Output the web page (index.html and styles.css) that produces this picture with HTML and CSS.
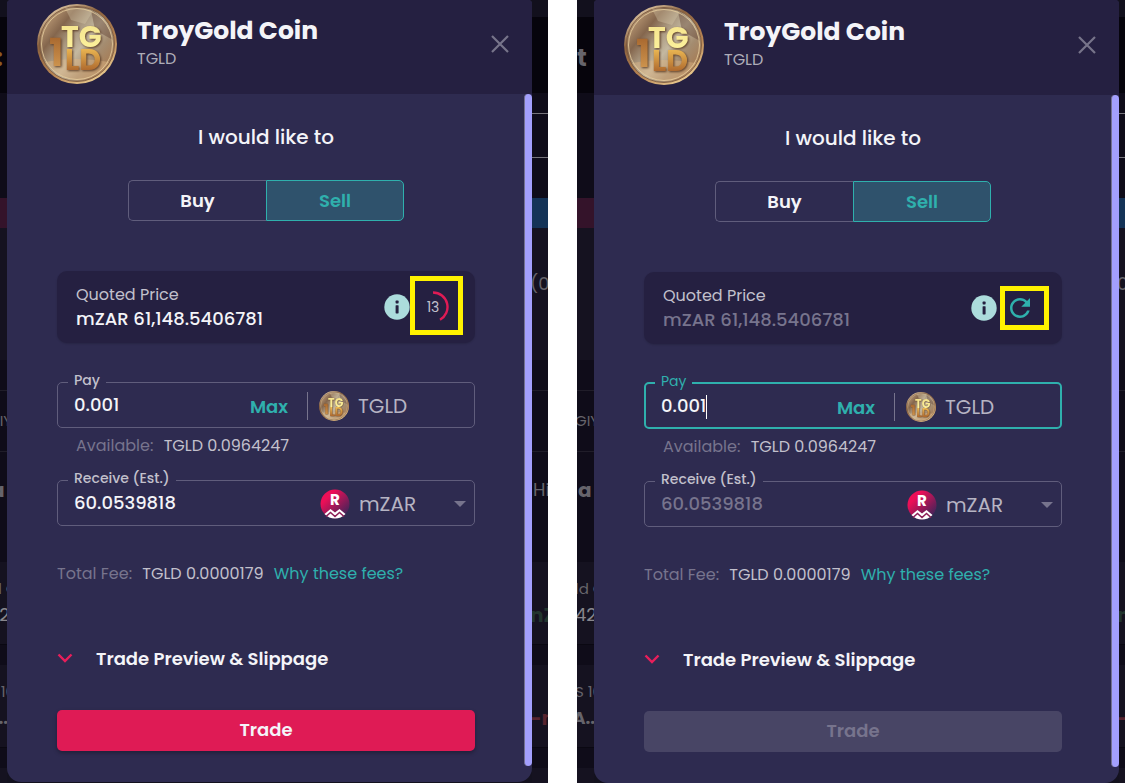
FILE: index.html
```html
<!DOCTYPE html>
<html lang="en">
<head>
  <meta charset="UTF-8">
  <meta name="viewport" content="width=device-width, initial-scale=1.0">
  <title>TroyGold Coin</title>
  <link rel="stylesheet" href="styles.css">
</head>
<body>
  <!-- shared icons -->
  <svg class="sprite" aria-hidden="true">
    <defs>
      <linearGradient id="metal" x1="0" y1="0.1" x2="1" y2="0.9">
        <stop offset="0" stop-color="#d3bda0"/>
        <stop offset="0.14" stop-color="#a78767"/>
        <stop offset="0.26" stop-color="#84664d"/>
        <stop offset="0.4" stop-color="#a8967e"/>
        <stop offset="0.55" stop-color="#c4b8a0"/>
        <stop offset="0.72" stop-color="#a48c70"/>
        <stop offset="0.86" stop-color="#a67f5a"/>
        <stop offset="1" stop-color="#dcb27a"/>
      </linearGradient>
      <linearGradient id="rim" x1="0.2" y1="0" x2="0.8" y2="1">
        <stop offset="0" stop-color="#e9d3b0"/>
        <stop offset="0.3" stop-color="#8b623f"/>
        <stop offset="0.65" stop-color="#b78453"/>
        <stop offset="1" stop-color="#f3d79a"/>
      </linearGradient>
      <linearGradient id="gold-light" x1="0" y1="0" x2="0" y2="1">
        <stop offset="0" stop-color="#f3e08a"/>
        <stop offset="1" stop-color="#fff6a0"/>
      </linearGradient>
      <linearGradient id="gold-dark" x1="0" y1="0" x2="0" y2="1">
        <stop offset="0.2" stop-color="#f0bd55"/>
        <stop offset="0.8" stop-color="#a8622b"/>
      </linearGradient>
      <linearGradient id="copper" x1="0" y1="0" x2="0" y2="1">
        <stop offset="0.2" stop-color="#a8682f"/>
        <stop offset="0.8" stop-color="#cf9650"/>
      </linearGradient>
      <linearGradient id="zar" x1="0.1" y1="0.1" x2="0.9" y2="0.9">
        <stop offset="0.2" stop-color="#ec0f57"/>
        <stop offset="1" stop-color="#3b2459"/>
      </linearGradient>
    </defs>
    <symbol id="coin" viewBox="0 0 80 80">
      <circle cx="40" cy="40" r="40" fill="url(#rim)"/>
      <circle cx="40" cy="40" r="37.5" fill="url(#metal)" stroke="#76543a" stroke-width="0.8"/>
      <path d="M54 6 Q70 14 76 36 L58 26Z" fill="#5a3a2c" opacity="0.4"/>
      <path d="M8 58 Q38 52 72 58 Q58 76 40 76 Q20 74 8 58Z" fill="#dfb888" opacity="0.45"/>
      <path d="M28 4 Q42 2 56 7 L48 20 L34 16Z" fill="#dccfae" opacity="0.35"/>
      <circle cx="40" cy="40" r="35.5" fill="none" stroke="#ead1a0" stroke-width="0.8"/>
      <g class="coin-text">
        <text x="12" y="62" font-size="38" fill="url(#copper)">1</text>
        <text x="24" y="43" font-size="30" fill="url(#gold-light)">TG</text>
        <text x="28" y="66" font-size="30" fill="url(#gold-dark)">LD</text>
      </g>
    </symbol>
    <symbol id="mzar" viewBox="0 0 30 30">
      <circle cx="15" cy="15" r="14.5" fill="url(#zar)"/>
      <path d="M4.5 25 L10.5 20 L15 23.5 L19.5 20 L25.5 25 Q21 29.5 15 29.5 Q9 29.5 4.5 25Z" fill="#fff"/>
      <path d="M6 27.5 L10.5 23.5 L15 27.5 L19.5 23.5 L24 27.5" fill="none" stroke="#8d2058" stroke-width="1.6"/>
      <text x="15" y="16" font-size="15" text-anchor="middle" class="zar-text">R</text>
    </symbol>
    <symbol id="close" viewBox="0 0 18 18">
      <path d="M1 1 L17 17 M17 1 L1 17" fill="none" stroke="#77748a" stroke-width="2.2"/>
    </symbol>
    <symbol id="info" viewBox="0 0 26 26">
      <circle cx="13" cy="13" r="12.7" fill="#acdcdc"/>
      <rect x="11.6" y="6.6" width="3" height="2.8" rx="0.6" fill="#252040"/>
      <rect x="11.6" y="11.2" width="3" height="8.2" rx="0.6" fill="#252040"/>
    </symbol>
    <symbol id="refresh" viewBox="0 0 24 24">
      <path d="M17.65 6.35C16.2 4.9 14.21 4 12 4c-4.42 0-7.99 3.58-7.99 8s3.57 8 7.99 8c3.73 0 6.84-2.55 7.73-6h-2.08c-.82 2.33-3.04 4-5.65 4-3.31 0-6-2.69-6-6s2.69-6 6-6c1.66 0 3.14.69 4.22 1.78L13 11h7V4l-2.35 2.35z" fill="#2fb0ad"/>
    </symbol>
    <symbol id="chevron" viewBox="0 0 16 10">
      <path d="M1.5 1.5 L8 8 L14.5 1.5" fill="none" stroke="#e91e5b" stroke-width="2.4"/>
    </symbol>
  </svg>

  <main class="compare">
    <section class="shot shot-counting">
      <div class="edge edge-left">
        <div class="row top"></div>
        <div class="row banner"><b class="amber">:</b></div>
        <div class="row plain"></div>
        <div class="row band maroon"></div>
        <div class="row panel"></div>
        <div class="row gap"></div>
        <div class="row names"><span>GIY</span></div>
        <div class="row heading"><b>a</b></div>
        <div class="row card"><small>ld G</small><span class="bright">42</span></div>
        <div class="row space"></div>
        <div class="row card"><small>S 10</small><b>A..</b></div>
        <div class="row space"></div>
        <div class="row last"></div>
      </div>

      <div class="modal">
        <header class="modal-header">
          <svg class="coin-big"><use href="#coin"/></svg>
          <div class="names-box">
            <h1>TroyGold Coin</h1>
            <p>TGLD</p>
          </div>
          <button class="close" aria-label="Close"><svg><use href="#close"/></svg></button>
        </header>
        <div class="modal-body">
          <form class="trade">
            <h2>I would like to</h2>
            <div class="toggle">
              <button type="button">Buy</button>
              <button type="button" class="selected">Sell</button>
            </div>
            <div class="quote">
              <div class="quote-text">
                <span>Quoted Price</span>
                <strong>mZAR 61,148.5406781</strong>
              </div>
              <svg class="info"><use href="#info"/></svg>
              <div class="timer">
                <svg viewBox="0 0 32 32"><path d="M16 1.5 A14.5 14.5 0 0 1 23 28.7" fill="none" stroke="#df1b55" stroke-width="2.4"/></svg>
                <span>13</span>
              </div>
              <div class="marker"></div>
            </div>
            <fieldset class="field">
              <legend><label for="pay-1">Pay</label></legend>
              <div class="field-row">
                <input id="pay-1" type="text" value="0.001">
                <button type="button" class="max">Max</button>
                <div class="asset divided">
                  <svg><use href="#coin"/></svg>
                  <span>TGLD</span>
                </div>
              </div>
            </fieldset>
            <p class="available">Available: <span>TGLD 0.0964247</span></p>
            <fieldset class="field">
              <legend><label for="receive-1">Receive (Est.)</label></legend>
              <div class="field-row">
                <input id="receive-1" type="text" value="60.0539818">
                <div class="asset">
                  <svg><use href="#mzar"/></svg>
                  <select aria-label="Receive asset"><option>mZAR</option></select>
                  <i class="arrow"></i>
                </div>
              </div>
            </fieldset>
            <p class="fee">Total Fee: <span>TGLD 0.0000179</span> <a href="#">Why these fees?</a></p>
            <button type="button" class="preview"><svg><use href="#chevron"/></svg>Trade Preview &amp; Slippage</button>
            <button type="submit" class="submit">Trade</button>
          </form>
          <div class="scrollbar"></div>
        </div>
      </div>

      <div class="edge edge-right">
        <div class="row top"></div>
        <div class="row banner"></div>
        <div class="row plain"><div class="search"></div></div>
        <div class="row band blue"></div>
        <div class="row panel"><span>(0</span></div>
        <div class="row gap"></div>
        <div class="row names"></div>
        <div class="row heading"><span>Hi</span></div>
        <div class="row card"><small></small><b class="green">nZ</b></div>
        <div class="row space"></div>
        <div class="row card"><small></small><b class="red">-m</b></div>
        <div class="row space"></div>
        <div class="row last"></div>
      </div>
    </section>

    <section class="shot shot-expired">
      <div class="edge edge-left">
        <div class="row top"></div>
        <div class="row banner"><b>t</b></div>
        <div class="row plain"></div>
        <div class="row band maroon"></div>
        <div class="row panel"></div>
        <div class="row gap"></div>
        <div class="row names"><span>GIY</span></div>
        <div class="row heading"><b>a</b></div>
        <div class="row card"><small>ld G</small><span class="bright">42</span></div>
        <div class="row space"></div>
        <div class="row card"><small>S 10</small><b>A..</b></div>
        <div class="row space"></div>
        <div class="row last"></div>
      </div>

      <div class="modal">
        <header class="modal-header">
          <svg class="coin-big"><use href="#coin"/></svg>
          <div class="names-box">
            <h1>TroyGold Coin</h1>
            <p>TGLD</p>
          </div>
          <button class="close" aria-label="Close"><svg><use href="#close"/></svg></button>
        </header>
        <div class="modal-body">
          <form class="trade">
            <h2>I would like to</h2>
            <div class="toggle">
              <button type="button">Buy</button>
              <button type="button" class="selected">Sell</button>
            </div>
            <div class="quote">
              <div class="quote-text">
                <span>Quoted Price</span>
                <strong class="stale">mZAR 61,148.5406781</strong>
              </div>
              <svg class="info"><use href="#info"/></svg>
              <button type="button" class="refresh" aria-label="Refresh"><svg><use href="#refresh"/></svg></button>
              <div class="marker"></div>
            </div>
            <fieldset class="field focused">
              <legend><label for="pay-2">Pay</label></legend>
              <div class="field-row">
                <input id="pay-2" type="text" value="0.001">
                <i class="caret"></i>
                <button type="button" class="max">Max</button>
                <div class="asset divided">
                  <svg><use href="#coin"/></svg>
                  <span>TGLD</span>
                </div>
              </div>
            </fieldset>
            <p class="available">Available: <span>TGLD 0.0964247</span></p>
            <fieldset class="field">
              <legend><label for="receive-2">Receive (Est.)</label></legend>
              <div class="field-row">
                <input id="receive-2" class="stale" type="text" value="60.0539818">
                <div class="asset">
                  <svg><use href="#mzar"/></svg>
                  <select aria-label="Receive asset"><option>mZAR</option></select>
                  <i class="arrow"></i>
                </div>
              </div>
            </fieldset>
            <p class="fee">Total Fee: <span>TGLD 0.0000179</span> <a href="#">Why these fees?</a></p>
            <button type="button" class="preview"><svg><use href="#chevron"/></svg>Trade Preview &amp; Slippage</button>
            <button type="submit" class="submit" disabled>Trade</button>
          </form>
          <div class="scrollbar"></div>
        </div>
      </div>

      <div class="edge edge-right">
        <div class="row top"></div>
        <div class="row banner"></div>
        <div class="row plain"><div class="search"></div></div>
        <div class="row band blue"></div>
        <div class="row panel"><span>0</span></div>
        <div class="row gap"></div>
        <div class="row names"></div>
        <div class="row heading"></div>
        <div class="row card"><small></small><b class="green">m</b></div>
        <div class="row space"></div>
        <div class="row card"><small></small><b class="red">-</b></div>
        <div class="row space"></div>
        <div class="row last"></div>
      </div>
    </section>
  </main>
</body>
</html>
```

FILE: styles.css
```css
* {
  margin: 0;
  padding: 0;
  box-sizing: border-box;
}

body {
  background-color: #fff;
  color: #f4f4f8;
  font-family: Poppins, Inter, "Liberation Sans", sans-serif;
  font-size: 16px;
}

button, input, select {
  font-family: inherit;
  color: inherit;
  background: none;
  border: none;
  outline: none;
}

button {
  cursor: pointer;
}

.sprite {
  position: absolute;
  width: 0;
  height: 0;
}

.compare {
  display: grid;
  grid-template-columns: 1fr 1fr;
  gap: 29px;
  height: 100vh;
  overflow: hidden;
}

.shot {
  display: grid;
  grid-template-columns: 7px 1fr 16px;
  background-color: #13111e;
  overflow: hidden;
}

.shot-expired {
  grid-template-columns: 17px 1fr 6px;
}

/* page behind the modal */
.edge {
  overflow: hidden;
  background-color: #0f0c19;
}

.edge-left {
  display: flex;
  flex-direction: column;
  align-items: flex-end;
}

.row {
  flex-shrink: 0;
  width: 17px;
  overflow: hidden;
  white-space: nowrap;
  text-indent: -2px;
  color: #66646b;
}

.row span, .row b, .row small {
  display: block;
  font-size: 18px;
  line-height: 26px;
}

.row small {
  height: 26px;
  font-size: 15px;
}

.row .bright {
  color: #88868c;
}

.top {
  height: 17px;
  background-color: #12101d;
}

.row.banner {
  height: 76px;
  padding-top: 28px;
  background-color: #06040c;
  text-indent: 0;
}

.row.banner b {
  font-size: 24px;
}

.row.banner .amber {
  padding-left: 6px;
  color: #8a5a22;
}

.plain {
  height: 105px;
  padding-top: 20px;
}

.search {
  height: 45px;
  border-top: 1px solid #77757c;
  border-bottom: 1px solid #77757c;
}

.band {
  height: 30px;
}

.maroon {
  background-color: #34132a;
}

.blue {
  background-color: #143357;
}

.panel {
  height: 132px;
  padding-top: 43px;
  background-color: #151220;
}

.gap {
  height: 30px;
}

.names {
  height: 61px;
  padding-top: 17px;
  border-top: 1px solid #201d29;
}

.row.names span {
  font-size: 15px;
}

.heading {
  height: 111px;
  padding-top: 25px;
  border-top: 1px solid #201d29;
}

.heading b, .row .green, .row .red {
  font-size: 20px;
}

.row.heading {
  text-indent: 1px;
}

.card {
  height: 83px;
  padding-top: 14px;
  background-color: #151220;
  border-bottom: 1px solid #0a0812;
}

.edge-left .card b {
  font-size: 17px;
  text-indent: -4px;
}

.row .green {
  color: #22352f;
}

.row .red {
  color: #57232e;
}

.space {
  height: 20px;
}

.last {
  height: 20px;
  background-color: #151220;
}

/* modal */
.modal {
  align-self: start;
  background-color: #2e2b50;
  border-radius: 4px 4px 14px 14px;
  overflow: hidden;
}

.modal-header {
  display: flex;
  align-items: center;
  gap: 20px;
  height: 94px;
  padding: 0 23px 6px 30px;
  background-color: #252041;
}

.shot-expired .modal-header {
  height: 95px;
  padding-bottom: 5px;
}

.coin-big {
  width: 80px;
  height: 80px;
}

.coin-text {
  font-weight: 700;
  filter: drop-shadow(1px 1px 1px #5e3f28);
}

.zar-text {
  font-weight: 700;
  fill: #fff;
}

.names-box {
  padding-bottom: 3px;
}

.names-box h1 {
  font-size: 25px;
  line-height: 32px;
}

.names-box p {
  font-size: 16px;
  line-height: 24px;
  color: #aeacb8;
}

.close {
  margin-left: auto;
  width: 18px;
  height: 18px;
}

.close svg {
  display: block;
  width: 18px;
  height: 18px;
}

.modal-body {
  display: flex;
}

.trade {
  display: flex;
  flex-direction: column;
  flex: 1;
  padding: 28px 49px 31px 50px;
}

.scrollbar {
  width: 8px;
  margin-bottom: 16px;
  background-color: #a39ffd;
  border-left: 1px solid #737190;
  border-radius: 4px;
}

.trade h2 {
  font-size: 20px;
  font-weight: 500;
  line-height: 30px;
  text-align: center;
}

.toggle {
  display: grid;
  grid-template-columns: 1fr 1fr;
  align-self: center;
  width: 276px;
  height: 41px;
  margin-top: 28px;
}

.toggle button {
  border: 1px solid #605d7c;
  border-right: none;
  border-radius: 5px 0 0 5px;
  font-size: 18px;
  font-weight: 600;
}

.toggle .selected {
  border: 1px solid #2fb0ad;
  border-radius: 0 5px 5px 0;
  background-color: #2f526c;
  color: #2fb0ad;
}

.quote {
  position: relative;
  display: flex;
  align-items: center;
  gap: 7px;
  height: 72px;
  margin-top: 50px;
  padding: 0 26px 0 19px;
  border-radius: 10px;
  background-color: #252041;
  box-shadow: 0 1px 2px rgba(0, 0, 0, 0.15);
}

.quote-text {
  flex: 1;
}

.quote-text span {
  display: block;
  line-height: 24px;
  color: #c2c0cc;
}

.quote-text strong {
  display: block;
  font-size: 18px;
  font-weight: 500;
  line-height: 24px;
}

.quote-text .stale, .stale {
  color: #77748d;
}

.info {
  width: 26px;
  height: 26px;
}

.timer {
  display: grid;
  place-items: center;
  width: 32px;
  height: 32px;
}

.timer svg, .timer span {
  grid-area: 1 / 1;
}

.timer svg {
  width: 32px;
  height: 32px;
}

.timer span {
  font-size: 14px;
  color: #c2c0cc;
}

.refresh {
  width: 32px;
  height: 32px;
}

.refresh svg {
  display: block;
  width: 30px;
  height: 30px;
  margin: auto;
}

.marker {
  position: absolute;
  top: 5px;
  right: 12px;
  width: 53px;
  height: 59px;
  border: 5px solid #fff200;
}

.shot-expired .marker {
  top: 14px;
  right: 13px;
  width: 49px;
  height: 44px;
}

.field {
  min-width: 0;
  height: 56px;
  padding: 0 8px 0 10px;
  border: 1px solid #605d7c;
  border-radius: 5px;
}

.quote + .field {
  margin-top: 29px;
}

.field legend {
  height: 20px;
  padding: 0 6px;
  font-size: 14px;
  font-weight: 500;
  line-height: 16px;
  color: #c2c0cc;
}

.field-row {
  display: flex;
  align-items: center;
  height: 28px;
  padding-left: 6px;
}

.field input {
  align-self: flex-start;
  width: 120px;
  height: 24px;
  font-size: 18px;
  font-weight: 500;
}

.field.focused {
  padding: 0 7px 0 9px;
  border: 2px solid #2fb0ad;
}

.focused legend {
  font-weight: 400;
  color: #2fb0ad;
}

.field.focused input {
  width: 45px;
}

.caret {
  width: 1px;
  height: 24px;
  background-color: #fff;
}

.max {
  margin-left: auto;
  margin-right: 19px;
  font-size: 18px;
  font-weight: 600;
  color: #2fb0ad;
}

.asset {
  display: flex;
  align-items: center;
  gap: 9px;
  width: 158px;
  height: 28px;
  margin-left: auto;
  padding-left: 12px;
  font-size: 20px;
  color: #b6b4c3;
}

.max + .asset {
  width: 159px;
  margin-left: 0;
}

.divided {
  padding-left: 11px;
  border-left: 1px solid #77748d;
}

.asset svg {
  width: 30px;
  height: 30px;
}

.asset select {
  flex: 1;
  appearance: none;
  font-size: 20px;
}

.arrow {
  border: 6px solid transparent;
  border-top-color: #77748d;
  border-bottom: none;
}

.available {
  margin: 6px 0 12px;
  padding-left: 19px;
  line-height: 24px;
  color: #77748d;
}

.available span, .fee span {
  margin: 0 6px;
  color: #c2c0cc;
}

.fee {
  margin-top: 36px;
  line-height: 24px;
  white-space: nowrap;
  color: #77748d;
}

.fee a {
  color: #2fb0ad;
  text-decoration: none;
}

.preview {
  display: flex;
  align-items: center;
  gap: 23px;
  height: 30px;
  margin-top: 57px;
  font-size: 18px;
  font-weight: 600;
}

.preview svg {
  width: 16px;
  height: 10px;
}

.submit {
  height: 41px;
  margin-top: 37px;
  padding-bottom: 2px;
  border-radius: 5px;
  background-color: #df1b55;
  box-shadow: 0 2px 4px rgba(0, 0, 0, 0.3);
  font-size: 18px;
  font-weight: 600;
}

.submit:disabled {
  background-color: #484565;
  box-shadow: none;
  color: #77748d;
}
```
